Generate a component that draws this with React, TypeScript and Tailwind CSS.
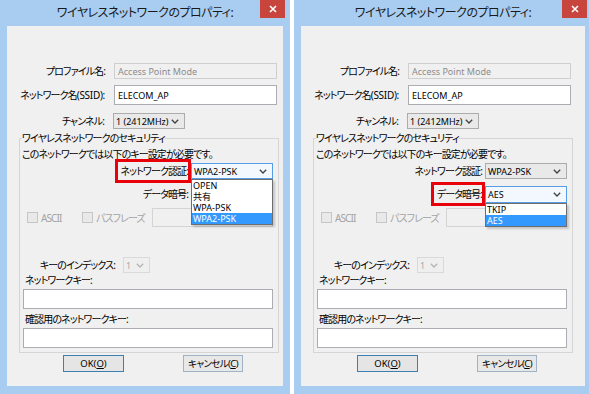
import React from "react";

function Chevron({ disabled }: { disabled?: boolean }) {
  return (
    <svg width="8" height="5" viewBox="0 0 8 5" className="shrink-0">
      <polyline
        points="0.8,0.8 4,4 7.2,0.8"
        fill="none"
        stroke={disabled ? "#b4b4b4" : "#404040"}
        strokeWidth="1.3"
      />
    </svg>
  );
}

function Select({
  value,
  open,
  disabled,
  widthClass,
  heightClass,
  items,
  selected,
}: {
  value: string;
  open?: boolean;
  disabled?: boolean;
  widthClass: string;
  heightClass: string;
  items?: string[];
  selected?: string;
}) {
  const box = open
    ? "border-[#569de5] bg-[#f2f8fd]"
    : disabled
    ? "border-[#d9d9d9] bg-[#efefef] text-[#a8a8a8]"
    : "border-[#acacac] bg-[#e9e9e9]";
  return (
    <div className={`relative ${widthClass} ${heightClass}`}>
      <div
        className={`flex h-full w-full items-center justify-between border pl-[2px] pr-[5px] text-[9px] leading-none tracking-normal ${box}`}
      >
        <span>{value}</span>
        <Chevron disabled={disabled} />
      </div>
      {open && items && (
        <div className="absolute left-0 top-full z-10 w-full border border-[#6e6e6e] bg-white shadow-[2px_2px_2px_rgba(0,0,0,0.18)]">
          {items.map((it) => (
            <div
              key={it}
              className={`flex h-[11px] items-center px-[1px] text-[9px] leading-none tracking-normal ${
                it === selected ? "bg-[#3399ff] text-white" : "text-black"
              }`}
            >
              {it}
            </div>
          ))}
        </div>
      )}
    </div>
  );
}

function RedLabel({ text, red }: { text: string; red?: boolean }) {
  return (
    <div className="relative">
      <span>{text}</span>
      {red && (
        <div className="pointer-events-none absolute -bottom-[7px] -left-[6px] -right-[3px] -top-[7px] border-[3px] border-[#e8000b]" />
      )}
    </div>
  );
}

function Checkbox({ label }: { label: string }) {
  return (
    <div className="flex items-center gap-[3px] text-[#a3a3a3]">
      <div className="h-[11px] w-[11px] border border-[#c6c6c6] bg-[#e9e9e9]" />
      <span className="text-[10px] leading-none">{label}</span>
    </div>
  );
}

function Dialog({ variant, widthClass }: { variant: "auth" | "enc"; widthClass: string }) {
  const authOpen = variant === "auth";
  const encOpen = variant === "enc";
  return (
    <div className={`flex h-[394px] shrink-0 flex-col bg-[#a9cdf0] ${widthClass}`}>
      {/* title bar */}
      <div className="relative flex h-[26px] shrink-0 items-center justify-center">
        <span className="pb-[1px] text-[12px] leading-none tracking-[-0.5px] text-[#1a1a1a]">
          ワイヤレスネットワークのプロパティ:
        </span>
        <div className="absolute right-[5px] top-0 flex h-[18px] w-[25px] items-center justify-center bg-[#c8453d]">
          <svg width="8" height="8" viewBox="0 0 8 8">
            <path d="M1 1 L7 7 M7 1 L1 7" stroke="white" strokeWidth="1.6" />
          </svg>
        </div>
      </div>

      {/* content */}
      <div className="mx-[7px] mb-[8px] flex flex-1 flex-col bg-[#f0f0f0] text-[10px] leading-none tracking-[-0.9px] text-black">
        {/* profile */}
        <div className="mt-[37px] flex h-[16px] items-center">
          <div className="w-[98px] text-right">プロファイル名:</div>
          <div className="ml-[9px] flex h-full w-[163px] items-center border border-[#cfcfcf] bg-[#f0f0f0] pl-[3px] text-[9px] tracking-normal text-[#8c8c8c]">
            Access Point Mode
          </div>
        </div>
        {/* ssid */}
        <div className="mt-[6px] flex h-[20px] items-center">
          <div className="w-[98px] text-right">
            ネットワーク名<span className="tracking-[-0.3px]">(SSID):</span>
          </div>
          <div className="ml-[9px] flex h-full w-[163px] items-center border border-[#abadb3] bg-white pl-[3px] text-[9px] tracking-normal">
            ELECOM_AP
          </div>
        </div>
        {/* channel */}
        <div className="mt-[8px] flex h-[16px] items-center">
          <div className="w-[97px] text-right">チャンネル:</div>
          <div className="ml-[9px]">
            <Select value="1 (2412MHz)" widthClass="w-[72px]" heightClass="h-[16px]" />
          </div>
        </div>

        {/* group */}
        <fieldset className="ml-[12px] mt-[3px] w-[260px] border border-[#d5d5d5] pb-[4px]">
          <legend className="ml-[2px] h-[12px] leading-[12px]">
            ワイヤレスネットワークのセキュリティ
          </legend>
          <div className="ml-[2px] mt-[4px] h-[12px] leading-[12px]">
            このネットワークでは以下のキー設定が必要です。
          </div>
          {/* auth */}
          <div className="mt-[3px] flex h-[16px] items-center">
            <div className="flex w-[168px] justify-end">
              <RedLabel text="ネットワーク認証:" red={authOpen} />
            </div>
            <div className="ml-[3px]">
              <Select
                value="WPA2-PSK"
                open={authOpen}
                widthClass="w-[82px]"
                heightClass="h-[16px]"
                items={["OPEN", "共有", "WPA-PSK", "WPA2-PSK"]}
                selected="WPA2-PSK"
              />
            </div>
          </div>
          {/* enc */}
          <div className="mt-[7px] flex h-[16px] items-center">
            <div className="flex w-[168px] justify-end">
              <RedLabel text="データ暗号:" red={encOpen} />
            </div>
            <div className={`ml-[3px] ${authOpen ? "" : "relative z-20"}`}>
              <Select
                value={authOpen ? "" : "AES"}
                open={encOpen}
                widthClass="w-[82px]"
                heightClass="h-[17px]"
                items={["TKIP", "AES"]}
                selected="AES"
              />
            </div>
          </div>
          {/* checkboxes */}
          <div className="mt-[6px] flex h-[19px] items-center">
            <div className="ml-[7px] w-[55px]">
              <Checkbox label="ASCII" />
            </div>
            <div className="w-[70px]">
              <Checkbox label="パスフレーズ" />
            </div>
            <div className="h-full w-[121px] border border-[#d4d4d4] bg-[#f0f0f0]" />
          </div>
          {/* key index */}
          <div className="mt-[30px] flex h-[16px] items-center">
            <div className="w-[95px] text-right">キーのインデックス:</div>
            <div className="ml-[8px]">
              <Select value="1" disabled widthClass="w-[27px]" heightClass="h-[16px]" />
            </div>
          </div>
          <div className="ml-[5px] mt-[1px] h-[12px] leading-[12px]">ネットワークキー:</div>
          <div className="ml-[3px] mt-[3px] h-[20px] w-[250px] border border-[#abadb3] bg-white" />
          <div className="ml-[5px] mt-[4px] h-[12px] leading-[12px]">確認用のネットワークキー:</div>
          <div className="ml-[3px] mt-[3px] h-[20px] w-[250px] border border-[#abadb3] bg-white" />
        </fieldset>

        {/* buttons */}
        <div className="mt-[2px] flex h-[17px]">
          <div className="ml-[56px] flex h-full w-[61px] items-center justify-center border border-[#3c7fb1] bg-[#e5e5e5] text-[9.5px] tracking-normal">
            OK(<span className="underline">O</span>)
          </div>
          <div className="ml-[59px] flex h-full w-[60px] items-center justify-center border border-[#9fb3c8] bg-[#e8e8e8] text-[9.5px] tracking-[-0.6px]">
            キャンセル(<span className="underline">C</span>)
          </div>
        </div>
      </div>
    </div>
  );
}

export default function App() {
  return (
    <div className="flex h-[394px] w-[589px] gap-[4px] overflow-hidden bg-white [font-family:'Noto_Sans','Noto_Sans_CJK_JP',sans-serif] [font-feature-settings:'palt']">
      <Dialog variant="auth" widthClass="w-[290px]" />
      <Dialog variant="enc" widthClass="w-[298px]" />
    </div>
  );
}
